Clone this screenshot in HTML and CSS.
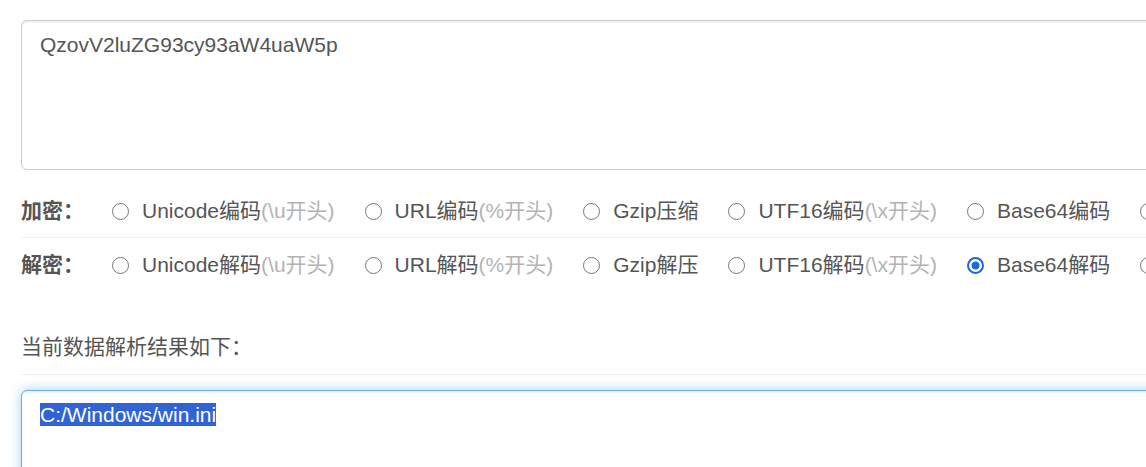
FILE: index.html
```html
<!DOCTYPE html>
<html lang="zh-CN">
<head>
<meta charset="utf-8">
<title>编码解码</title>
<link rel="stylesheet" href="styles.css">
</head>
<body>
<div class="page">
  <div class="box box-src">QzovV2luZG93cy93aW4uaW5p</div>

  <div class="opt-row">
    <span class="opt-title">加密：</span>
    <label class="radio"><span class="dot"></span>Unicode编码<span class="hint">(\u开头)</span></label>
    <label class="radio"><span class="dot"></span>URL编码<span class="hint">(%开头)</span></label>
    <label class="radio"><span class="dot"></span>Gzip压缩</label>
    <label class="radio"><span class="dot"></span>UTF16编码<span class="hint">(\x开头)</span></label>
    <label class="radio"><span class="dot"></span>Base64编码</label>
    <label class="radio"><span class="dot"></span>Hex编码</label>
  </div>
  <div class="sep"></div>
  <div class="opt-row">
    <span class="opt-title">解密：</span>
    <label class="radio"><span class="dot"></span>Unicode解码<span class="hint">(\u开头)</span></label>
    <label class="radio"><span class="dot"></span>URL解码<span class="hint">(%开头)</span></label>
    <label class="radio"><span class="dot"></span>Gzip解压</label>
    <label class="radio"><span class="dot"></span>UTF16解码<span class="hint">(\x开头)</span></label>
    <label class="radio"><span class="dot checked"></span>Base64解码</label>
    <label class="radio"><span class="dot"></span>Hex解码</label>
  </div>

  <div class="result-title">当前数据解析结果如下：</div>
  <div class="sep sep-result"></div>
  <div class="box box-out"><span class="sel">C:/Windows/win.ini</span></div>
</div>
</body>
</html>
```

FILE: styles.css
```css
html, body {
  margin: 0;
  padding: 0;
  background: #fff;
  overflow: hidden;
}

body {
  font-family: "Liberation Sans", "Noto Sans CJK SC", sans-serif;
  font-size: 21px;
  line-height: 30px;
  color: #555;
}

.page {
  width: 1300px;
  padding: 20px 0 0 21px;
}

.box {
  box-sizing: border-box;
  width: 1260px;
  border: 1.5px solid #ccc;
  border-radius: 6px;
  padding: 9px 18px;
  color: #555;
  background: #fff;
  box-shadow: inset 0 1.5px 1.5px rgba(0, 0, 0, 0.075);
}

.box-src {
  height: 150px;
}

.box-out {
  height: 150px;
  border-color: #66afe9;
  box-shadow: inset 0 1.5px 1.5px rgba(0, 0, 0, 0.075), 0 0 12px rgba(102, 175, 233, 0.6);
}

.sel {
  background: #3064d4;
  color: #fff;
}

.opt-row {
  display: flex;
  align-items: center;
  white-space: nowrap;
  height: 30px;
}

.box-src + .opt-row {
  margin-top: 26px;
}

.opt-title {
  font-weight: bold;
  width: 91px;
  flex: none;
}

.radio {
  display: inline-flex;
  align-items: center;
  margin-right: 30px;
  flex: none;
}

.dot {
  box-sizing: border-box;
  width: 17px;
  height: 17px;
  border: 1.5px solid #767676;
  border-radius: 50%;
  margin-right: 13px;
  background: #fff;
  flex: none;
}

.dot.checked {
  border: 2px solid #1668e3;
  background: radial-gradient(circle, #1668e3 0 3.6px, #fff 4.4px);
}

.hint {
  color: #b3b3b3;
}

.sep {
  width: 1260px;
  height: 1px;
  background: #eee;
  margin: 11px 0 12px;
}

.result-title {
  margin-top: 52px;
}

.sep-result {
  margin: 12px 0 15px;
}
```
